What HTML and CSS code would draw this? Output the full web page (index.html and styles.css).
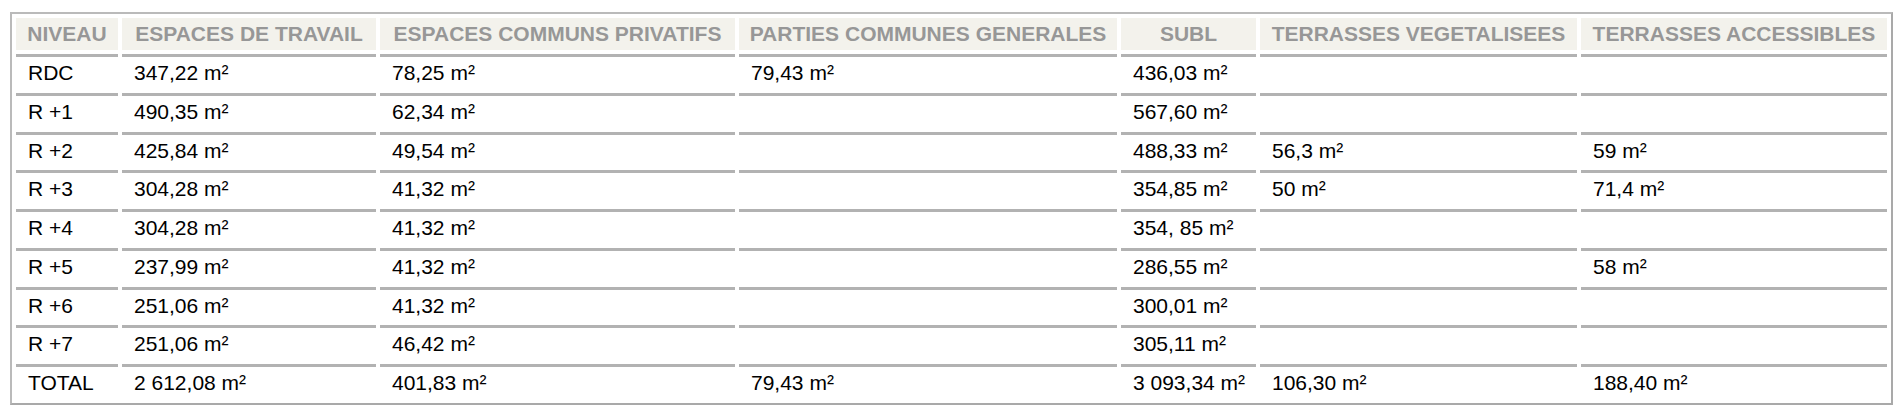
FILE: index.html
```html
<!DOCTYPE html>
<html lang="fr">
<head>
<meta charset="utf-8">
<title>Surfaces par niveau</title>
<link rel="stylesheet" href="styles.css">
</head>
<body>
<div class="wrap">
<table class="surfaces">
  <thead>
    <tr>
      <th class="c-niveau">NIVEAU</th>
      <th class="c-travail">ESPACES DE TRAVAIL</th>
      <th class="c-privatifs">ESPACES COMMUNS PRIVATIFS</th>
      <th class="c-generales">PARTIES COMMUNES GENERALES</th>
      <th class="c-subl">SUBL</th>
      <th class="c-veget">TERRASSES VEGETALISEES</th>
      <th class="c-access">TERRASSES ACCESSIBLES</th>
    </tr>
  </thead>
  <tbody>
    <tr><td>RDC</td><td>347,22 m²</td><td>78,25 m²</td><td>79,43 m²</td><td>436,03 m²</td><td></td><td></td></tr>
    <tr><td>R +1</td><td>490,35 m²</td><td>62,34 m²</td><td></td><td>567,60 m²</td><td></td><td></td></tr>
    <tr><td>R +2</td><td>425,84 m²</td><td>49,54 m²</td><td></td><td>488,33 m²</td><td>56,3 m²</td><td>59 m²</td></tr>
    <tr><td>R +3</td><td>304,28 m²</td><td>41,32 m²</td><td></td><td>354,85 m²</td><td>50 m²</td><td>71,4 m²</td></tr>
    <tr><td>R +4</td><td>304,28 m²</td><td>41,32 m²</td><td></td><td>354, 85 m²</td><td></td><td></td></tr>
    <tr><td>R +5</td><td>237,99 m²</td><td>41,32 m²</td><td></td><td>286,55 m²</td><td></td><td>58 m²</td></tr>
    <tr><td>R +6</td><td>251,06 m²</td><td>41,32 m²</td><td></td><td>300,01 m²</td><td></td><td></td></tr>
    <tr><td>R +7</td><td>251,06 m²</td><td>46,42 m²</td><td></td><td>305,11 m²</td><td></td><td></td></tr>
    <tr><td>TOTAL</td><td>2 612,08 m²</td><td>401,83 m²</td><td>79,43 m²</td><td>3 093,34 m²</td><td>106,30 m²</td><td>188,40 m²</td></tr>
  </tbody>
</table>
</div>
</body>
</html>
```

FILE: styles.css
```css
html, body {
  margin: 0;
  padding: 0;
  background: #ffffff;
}

.wrap {
  padding: 12px 0 0 10px;
}

.surfaces {
  width: 1883px;
  table-layout: fixed;
  border-collapse: separate;
  border-spacing: 4px;
  border: 2px solid #bababa;
  border-right-color: #a9a9a9;
  border-bottom-color: #a9a9a9;
  font-family: "Liberation Sans", Arial, sans-serif;
  font-size: 21px;
  line-height: 24px;
}

.surfaces th {
  box-sizing: border-box;
  background: #f3f2ec;
  color: #979797;
  font-weight: bold;
  text-align: center;
  white-space: nowrap;
  padding: 4px 4px;
  height: 32px;
}

.surfaces td {
  box-sizing: border-box;
  color: #000000;
  text-align: left;
  white-space: nowrap;
  border-top: 3px solid #b2b2b2;
  padding: 4px 12px 3.75px;
  height: 34.75px;
}

.c-niveau { width: 102px; }
.c-travail { width: 254px; }
.c-privatifs { width: 355px; }
.c-generales { width: 378px; }
.c-subl { width: 135px; }
.c-veget { width: 317px; }
.c-access { width: 306px; }
```
